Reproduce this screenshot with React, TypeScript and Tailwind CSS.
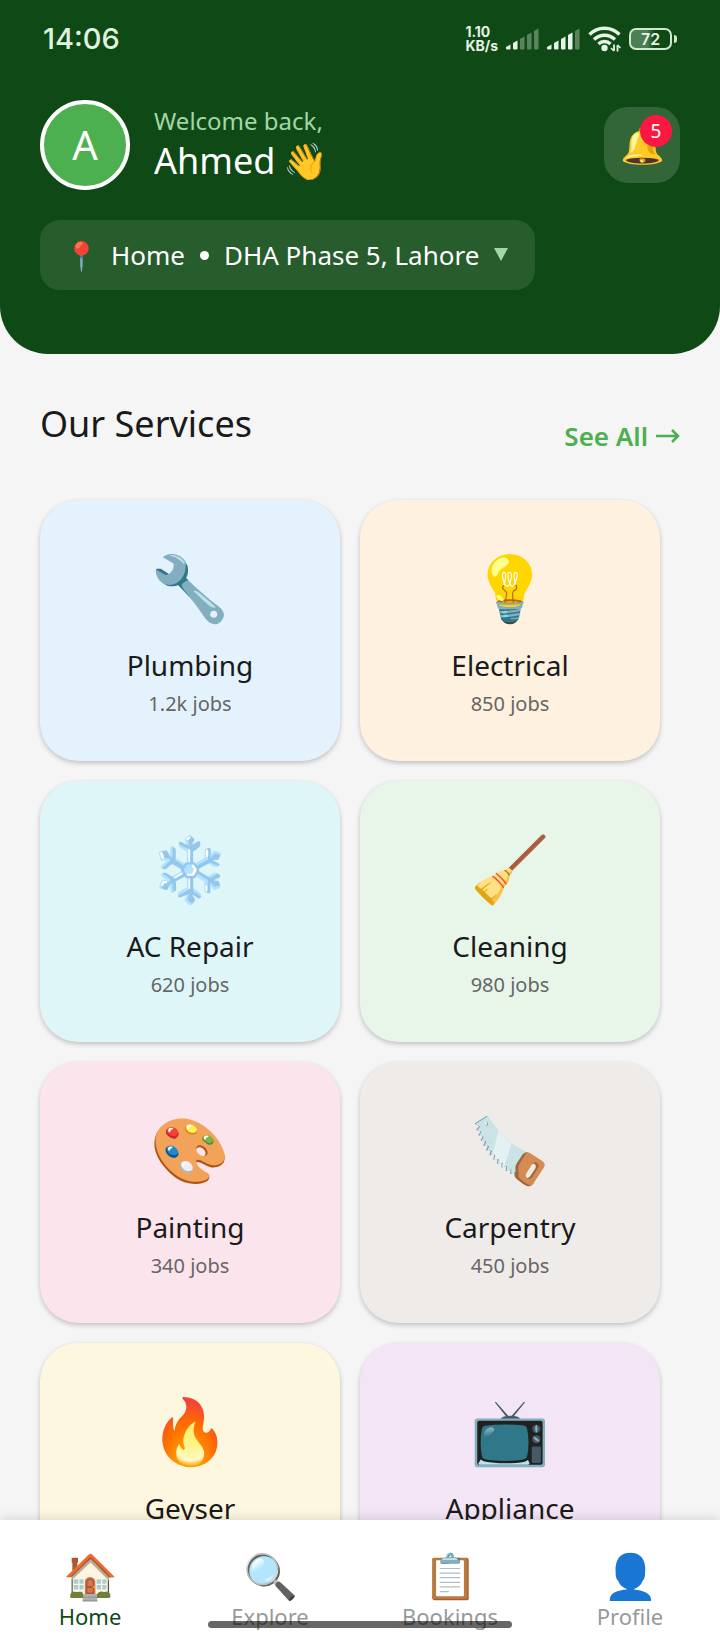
import { clsx } from 'clsx';

interface Service {
  name: string;
  jobs: string;
  icon: string;
  tint: string;
}

const services: readonly Service[] = [
  { name: 'Plumbing', jobs: '1.2k jobs', icon: '🔧', tint: 'bg-[#e3f2fd]' },
  { name: 'Electrical', jobs: '850 jobs', icon: '💡', tint: 'bg-[#fff1df]' },
  { name: 'AC Repair', jobs: '620 jobs', icon: '❄️', tint: 'bg-[#dff6f9]' },
  { name: 'Cleaning', jobs: '980 jobs', icon: '🧹', tint: 'bg-[#e8f5e9]' },
  { name: 'Painting', jobs: '340 jobs', icon: '🎨', tint: 'bg-[#fbe4ec]' },
  { name: 'Carpentry', jobs: '450 jobs', icon: '🪚', tint: 'bg-[#efebe9]' },
  { name: 'Geyser', jobs: '290 jobs', icon: '🔥', tint: 'bg-[#fef7e0]' },
  { name: 'Appliance', jobs: '510 jobs', icon: '📺', tint: 'bg-[#f3e5f5]' },
];

const tabs = [
  { label: 'Home', icon: '🏠' },
  { label: 'Explore', icon: '🔍' },
  { label: 'Bookings', icon: '📋' },
  { label: 'Profile', icon: '👤' },
];

// top edge of each bar, shortest first
const signalBars = [17, 13, 9, 5, 1];

function SignalIcon({ level }: { level: number }): React.JSX.Element {
  return (
    <svg viewBox="0 0 33 22" className="h-[22px] w-[33px] fill-[#e6f3e6]" aria-hidden="true">
      {signalBars.map((top, i) => (
        <path
          key={top}
          d={`M${i * 7} 20.5V${top + 2}l4.5-2.5V20.5q0 1-1 1h-2.5q-1 0-1-1z`}
          opacity={i < level ? 1 : 0.35}
        />
      ))}
    </svg>
  );
}

function WifiIcon(): React.JSX.Element {
  return (
    <svg viewBox="0 0 33 26" className="h-[26px] w-[33px]" fill="none" stroke="#e6f3e6" strokeWidth="3.4" aria-hidden="true">
      <path d="M1.5 8.5a21 21 0 0 1 30 0" />
      <path d="M6 13.5a15 15 0 0 1 21 0" />
      <path d="M10.5 18a8.5 8.5 0 0 1 12 0" />
      <circle cx="16.5" cy="22" r="3.2" fill="#e6f3e6" stroke="none" />
      <path d="M26 18.5v6.5M29.5 25.5v-6.5" strokeWidth="1.8" />
      <path d="M23 22l3 3M32.5 22l-3-3" strokeWidth="1.5" />
    </svg>
  );
}

function BatteryIcon(): React.JSX.Element {
  return (
    <div className="flex items-center gap-0.5" role="img" aria-label="Battery 72%">
      <div className="flex h-[22px] w-[43px] items-center justify-center rounded-[7px] border-2 border-[#cfe6cf] bg-linear-to-r from-[#4d7f55] from-40% to-[#0f4a16] to-60%">
        <span className="font-[Inter] text-[16px] leading-4 font-semibold text-[#e6f3e6]">72</span>
      </div>
      <div className="h-2 w-[3px] rounded-r-full bg-[#cfe6cf]" />
    </div>
  );
}

function StatusBar(): React.JSX.Element {
  return (
    <div className="flex h-[78px] items-center justify-between px-[43px]">
      <span className="font-[Inter] text-[29px] leading-8 font-medium text-[#e0f2e0]">14:06</span>
      <div className="flex items-center gap-2">
        <p className="font-[Inter] text-[14px] leading-[14px] font-bold text-[#e6f3e6]">
          1.10
          <br />
          KB/s
        </p>
        <SignalIcon level={2} />
        <SignalIcon level={4} />
        <WifiIcon />
        <BatteryIcon />
      </div>
    </div>
  );
}

function Header(): React.JSX.Element {
  return (
    <header className="shrink-0 rounded-b-[48px] bg-[#0f4a16] pb-16 text-white">
      <StatusBar />
      <div className="flex items-center gap-6 px-10 pt-[22px]">
        <div className="flex size-[90px] items-center justify-center rounded-full border-4 border-white bg-[#4caf50] text-[40px] leading-none">
          A
        </div>
        <div className="flex-1">
          <p className="text-[24px] leading-8 text-[#a5d6a7]">Welcome back,</p>
          <h1 className="flex items-center gap-2 text-[36px] leading-[48px]">
            Ahmed <span>👋</span>
          </h1>
        </div>
        <button
          type="button"
          aria-label="Notifications"
          className="relative flex size-[76px] items-center justify-center rounded-3xl bg-white/15 text-[36px] leading-none"
        >
          🔔
          <span className="absolute top-2 right-2 flex size-8 items-center justify-center rounded-full bg-[#ff1744] text-[19px] leading-none">
            5
          </span>
        </button>
      </div>
      <button
        type="button"
        className="mt-[30px] ml-10 flex h-[70px] items-center rounded-[20px] bg-white/10 pr-[26px] pl-6 text-[26px] leading-8 whitespace-nowrap"
      >
        <span className="text-[28px]">📍</span>
        <span className="ml-3">Home</span>
        <span className="mx-[15px] size-[9px] rounded-full bg-white" />
        <span className="mr-[14px]">DHA Phase 5, Lahore</span>
        <svg viewBox="0 0 16 14" className="h-[14px] w-4 fill-[#a5d6a7]" aria-hidden="true">
          <path d="M1 0h14L8 13z" />
        </svg>
      </button>
    </header>
  );
}

function ServiceCard({ service }: { service: Service }): React.JSX.Element {
  return (
    <button
      type="button"
      className={clsx(
        'flex h-[261px] flex-col items-center rounded-[38px] pt-[46px] shadow-[0_2px_5px_rgba(0,0,0,0.22)]',
        service.tint,
      )}
    >
      <span className="text-[64px] leading-[82px]">{service.icon}</span>
      <span className="mt-[17px] text-[28px] leading-10 text-[#1a1a1a]">{service.name}</span>
      <span className="mt-[5px] text-[20px] leading-7 text-[#666666]">{service.jobs}</span>
    </button>
  );
}

function TabBar(): React.JSX.Element {
  return (
    <nav className="relative grid shrink-0 grid-cols-4 bg-white pt-[29px] pb-2.5 shadow-[0_-2px_10px_rgba(0,0,0,0.12)]">
      {tabs.map((tab, i) => (
        <a key={tab.label} href={`#${tab.label.toLowerCase()}`} className="flex flex-col items-center gap-px">
          <span className="text-[44px] leading-[52px]">{tab.icon}</span>
          <span className={clsx('text-[22px] leading-7', i === 0 ? 'text-[#0f4a16]' : 'text-[#999999]')}>
            {tab.label}
          </span>
        </a>
      ))}
      <div className="absolute bottom-3 left-1/2 h-[7px] w-[304px] -translate-x-1/2 rounded-full bg-black/60" />
    </nav>
  );
}

export default function App(): React.JSX.Element {
  return (
    <div className="flex h-screen flex-col bg-[#f5f5f5] font-['Noto_Sans',sans-serif]">
      <Header />
      <main className="min-h-0 flex-1 overflow-y-auto pt-[46px] pb-5 [scrollbar-width:none]">
        <div className="flex items-end justify-between px-10">
          <h2 className="pb-2 text-[36px] leading-[48px] text-[#1a1a1a]">Our Services</h2>
          <a href="#services" className="flex items-center gap-2 text-[26px] leading-10 font-semibold text-[#4caf50]">
            See All
            <svg viewBox="0 0 24 16" className="h-4 w-6" fill="none" stroke="currentColor" strokeWidth="2.5" aria-hidden="true">
              <path d="M0 8h22M16 2l6 6-6 6" />
            </svg>
          </a>
        </div>
        <div className="mt-11 grid grid-cols-2 gap-5 pr-[60px] pl-10">
          {services.map((service) => (
            <ServiceCard key={service.name} service={service} />
          ))}
        </div>
      </main>
      <TabBar />
    </div>
  );
}
